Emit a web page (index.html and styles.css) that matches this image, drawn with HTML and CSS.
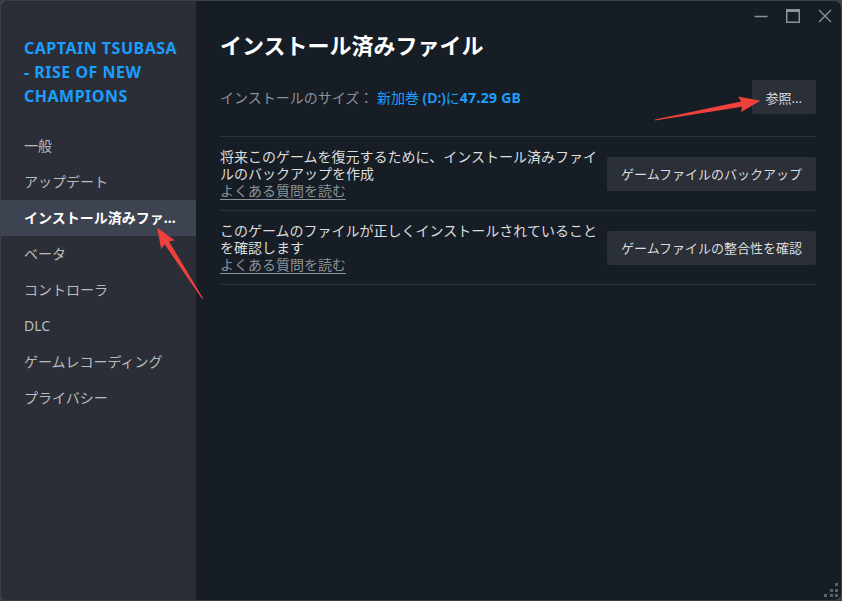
FILE: index.html
```html
<!DOCTYPE html>
<html lang="ja">
<head>
<meta charset="utf-8">
<title>インストール済みファイル</title>
<link rel="stylesheet" href="styles.css">
</head>
<body>
<div class="window">
  <aside class="sidebar">
    <div class="game-title">CAPTAIN TSUBASA - RISE OF NEW CHAMPIONS</div>
    <nav class="nav">
      <div class="nav-item">一般</div>
      <div class="nav-item">アップデート</div>
      <div class="nav-item active">インストール済みファイル</div>
      <div class="nav-item">ベータ</div>
      <div class="nav-item">コントローラ</div>
      <div class="nav-item">DLC</div>
      <div class="nav-item">ゲームレコーディング</div>
      <div class="nav-item">プライバシー</div>
    </nav>
  </aside>
  <main class="main">
    <div class="titlebar">
      <div class="wbtn">
        <svg width="14" height="14" viewBox="0 0 14 14"><path d="M0.5 7.5H13.5" stroke="#8b929a" stroke-width="1.4"/></svg>
      </div>
      <div class="wbtn">
        <svg width="14" height="14" viewBox="0 0 14 14"><rect x="0.75" y="0.75" width="12.5" height="12.5" fill="none" stroke="#8b929a" stroke-width="1.5"/><path d="M0.5 2H13.5" stroke="#8b929a" stroke-width="2.2"/></svg>
      </div>
      <div class="wbtn">
        <svg width="14" height="14" viewBox="0 0 14 14"><path d="M1 1L13 13M13 1L1 13" stroke="#8b929a" stroke-width="1.4"/></svg>
      </div>
    </div>
    <div class="content">
      <h1 class="heading">インストール済みファイル</h1>
      <div class="size-row">
        <div class="size-text"><span class="size-label">インストールのサイズ：</span> <span class="size-value">新加巻 <span class="drive">(D:)</span>に<b>47.29 GB</b></span></div>
        <button class="btn">参照...</button>
      </div>
      <div class="rows">
        <div class="row">
          <div class="row-text">
            <div class="desc">将来このゲームを復元するために、インストール済みファイルのバックアップを作成</div>
            <a class="faq">よくある質問を読む</a>
          </div>
          <button class="btn wide">ゲームファイルのバックアップ</button>
        </div>
        <div class="row">
          <div class="row-text">
            <div class="desc">このゲームのファイルが正しくインストールされていることを確認します</div>
            <a class="faq">よくある質問を読む</a>
          </div>
          <button class="btn wide">ゲームファイルの整合性を確認</button>
        </div>
      </div>
    </div>
    <div class="grip">
      <span></span><span></span><span></span><span></span><span></span><span></span>
    </div>
  </main>
  <svg class="arrows" width="842" height="601" viewBox="0 0 842 601">
    <g transform="translate(655 120) rotate(-10.4)">
      <polygon points="0,-0.6 88,-2.6 86,-8 107,0 86,8 88,2.6 0,0.6" fill="#f0403c"/>
    </g>
    <g transform="translate(202.5 298.5) rotate(-122.7)">
      <polygon points="0,-0.6 66,-2.6 64,-8 84,0 64,8 66,2.6 0,0.6" fill="#f0403c"/>
    </g>
  </svg>
</div>
</body>
</html>
```

FILE: styles.css
```css
* { box-sizing: border-box; }
html, body {
  margin: 0;
  padding: 0;
  background: #3c3e43;
}
body {
  font-family: "Noto Sans", "Noto Sans CJK JP", sans-serif;
  font-size: 14px;
  color: #dcdedf;
}
.window {
  position: relative;
  width: 842px;
  height: 601px;
  display: flex;
  border: 1px solid #3d4047;
  border-radius: 8px;
  overflow: hidden;
  background: #171d25;
}
.sidebar {
  width: 195px;
  flex: none;
  background: #2b2e36;
  padding: 35px 0 0 0;
}
.game-title {
  padding: 0 16px 0 23px;
  color: #1a9fff;
  font-weight: 700;
  font-size: 16px;
  letter-spacing: 0.5px;
  line-height: 24px;
}
.nav {
  margin-top: 20px;
  display: flex;
  flex-direction: column;
}
.nav-item {
  height: 36px;
  line-height: 36px;
  padding: 0 16px 0 23px;
  color: #b8bcbf;
  white-space: nowrap;
  overflow: hidden;
  text-overflow: ellipsis;
}
.nav-item.active {
  background: #3d4350;
  color: #ffffff;
  font-weight: 700;
}
.main {
  position: relative;
  flex: 1;
  display: flex;
  flex-direction: column;
}
.titlebar {
  height: 30px;
  display: flex;
  justify-content: flex-end;
}
.wbtn {
  width: 32px;
  height: 30px;
  display: flex;
  align-items: center;
  justify-content: center;
}
.content {
  padding: 0 25px 0 24px;
}
.heading {
  margin: 0;
  font-size: 22px;
  line-height: 28px;
  font-weight: 700;
  color: #ffffff;
}
.size-row {
  margin-top: 21px;
  height: 34px;
  display: flex;
  align-items: center;
  justify-content: space-between;
}
.size-label { color: #8b929a; }
.size-value { color: #1a9fff; }
.size-value .drive { font-weight: 600; }
.size-value b { font-weight: 700; letter-spacing: 0.3px; }
.btn {
  font-family: inherit;
  font-size: 13px;
  color: #dcdedf;
  background: #2b2f38;
  border: none;
  border-radius: 2px;
  height: 34px;
  padding: 0 14px;
}
.btn.wide {
  width: 209px;
  flex: none;
  padding: 0;
}
.rows {
  margin-top: 22px;
  border-bottom: 1px solid #2b3039;
}
.row {
  border-top: 1px solid #2b3039;
  padding: 11px 0 11px;
  display: flex;
  align-items: center;
  gap: 8px;
}
.row-text {
  flex: 1;
  line-height: 17px;
}
.desc { color: #dcdedf; }
.faq {
  color: #8b929a;
  text-decoration: underline;
  text-underline-offset: 3px;
}
.grip {
  position: absolute;
  right: 3px;
  bottom: 3px;
  width: 14px;
  height: 14px;
  display: grid;
  grid-template-columns: repeat(3, 3px);
  grid-template-rows: repeat(3, 3px);
  gap: 2.5px;
}
.grip span { background: #5b616b; }
.grip span:nth-child(1) { grid-column: 3; grid-row: 1; }
.grip span:nth-child(2) { grid-column: 2; grid-row: 2; }
.grip span:nth-child(3) { grid-column: 3; grid-row: 2; }
.grip span:nth-child(4) { grid-column: 1; grid-row: 3; }
.grip span:nth-child(5) { grid-column: 2; grid-row: 3; }
.grip span:nth-child(6) { grid-column: 3; grid-row: 3; }
.arrows {
  position: absolute;
  left: -1px;
  top: -1px;
  pointer-events: none;
}
```
